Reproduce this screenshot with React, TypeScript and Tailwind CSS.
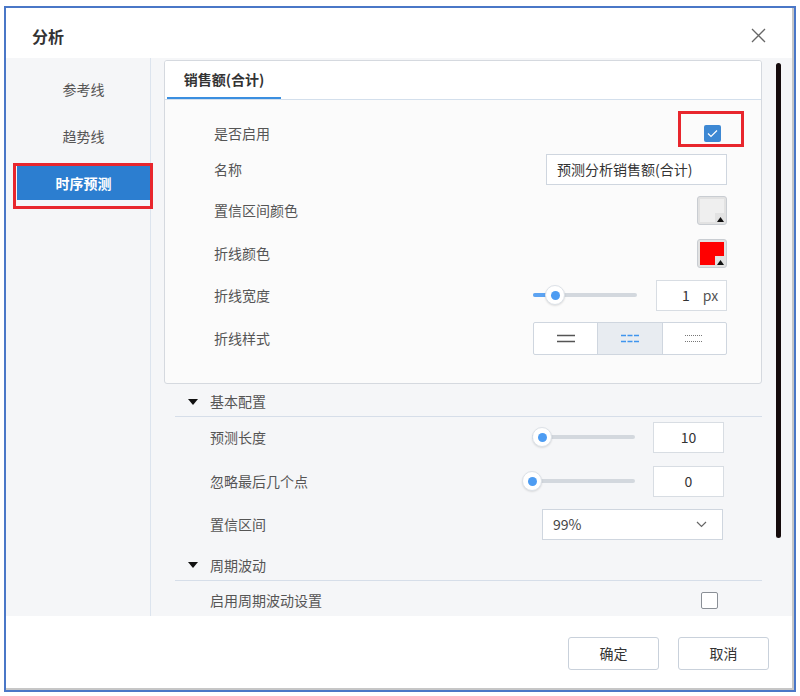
import type { FC, ReactNode } from "react";

// Small slider: track + optional fill + thumb
const Slider: FC<{ width: number; thumb: number }> = ({ width, thumb }) => (
    <div className="relative h-[20px]" style={{ width }}>
        <div className="absolute left-0 right-0 top-[8px] h-[4px] rounded-full bg-[#d3d8de]" />
        <div className="absolute left-0 top-[8px] h-[4px] rounded-full bg-[#5ca3f2]" style={{ width: thumb }} />
        <div
            className="absolute top-0 flex h-[20px] w-[20px] items-center justify-center rounded-full border border-[#dde2e8] bg-white shadow-[0_1px_2px_rgba(0,0,0,0.12)]"
            style={{ left: thumb - 10 }}
        >
            <div className="h-[9px] w-[9px] rounded-full bg-[#4d9cf2]" />
        </div>
    </div>
);

const Swatch: FC<{ fill: string }> = ({ fill }) => (
    <div className="relative h-[29px] w-[30px] rounded-[3px] border border-[#c9cdd2] bg-[#e2e2e2] p-[2px]">
        <div className={`h-full w-full ${fill}`} />
        <div className="absolute bottom-[1px] right-[1px] flex h-[10px] w-[10px] items-end justify-center bg-[#e2e2e2]">
            <svg width="7" height="5" viewBox="0 0 7 5" className="mb-[1px]">
                <polygon points="3.5,0 7,5 0,5" fill="#111" />
            </svg>
        </div>
    </div>
);

const LineIcon: FC<{ dash?: string; color: string; width?: number }> = ({ dash, color, width = 1.5 }) => (
    <svg width="18" height="9" viewBox="0 0 18 9">
        <line x1="0" y1="1.5" x2="18" y2="1.5" stroke={color} strokeWidth={width} strokeDasharray={dash} />
        <line x1="0" y1="7.5" x2="18" y2="7.5" stroke={color} strokeWidth={width} strokeDasharray={dash} />
    </svg>
);

const Row: FC<{ label: string; h: string; children?: ReactNode }> = ({ label, h, children }) => (
    <div className={`flex items-center justify-between ${h}`}>
        <span className="text-[14px] text-[#555]">{label}</span>
        {children}
    </div>
);

const SectionHead: FC<{ label: string; cls: string }> = ({ label, cls }) => (
    <div className={`flex items-center border-b border-[#d6dee9] pl-[13px] ${cls}`}>
        <svg width="10" height="6" viewBox="0 0 10 6">
            <polygon points="0,0 10,0 5,6" fill="#111" />
        </svg>
        <span className="ml-[12px] text-[14px] text-[#555]">{label}</span>
    </div>
);

const App: FC = () => {
    const sideItems = ["参考线", "趋势线", "时序预测"];

    return (
        <div className="h-[696px] w-[800px] bg-white pl-[4px] pt-[6px] font-['Noto_Sans_CJK_SC',sans-serif]">
            <div className="h-[686px] w-[792px] border-2 border-[#4a77c7] bg-white">
                <div className="flex h-full w-full flex-col border-b-2 border-r-2 border-[#c6c6c6]">
                    {/* Title */}
                    <div className="flex h-[50px] shrink-0 items-center justify-between pl-[26px] pr-[26px] pt-[5px]">
                        <span className="text-[16px] font-bold text-[#333]">分析</span>
                        <svg width="15" height="15" viewBox="0 0 15 15">
                            <path d="M1 1 L14 14 M14 1 L1 14" stroke="#666" strokeWidth="1.3" />
                        </svg>
                    </div>

                    {/* Body */}
                    <div className="flex h-[558px] shrink-0 bg-[#f5f6f8]">
                        {/* Sidebar */}
                        <div className="flex w-[145px] shrink-0 flex-col gap-[13px] border-r border-[#dce4ee] pt-[14px]">
                            {sideItems.map((s, i) => {
                                const active = i === 2;
                                return (
                                    <div
                                        key={s}
                                        className={`relative ml-[11px] flex h-[34px] items-center justify-center text-[14px] ${
                                            active ? "bg-[#2c7ed0] font-bold text-white" : "text-[#555]"
                                        }`}
                                    >
                                        {s}
                                        {active && (
                                            <div className="absolute -left-[4px] -top-[3px] h-[46px] w-[140px] border-[3px] border-[#e8262d]" />
                                        )}
                                    </div>
                                );
                            })}
                        </div>

                        {/* Content */}
                        <div className="relative flex-1 overflow-hidden pl-[13px] pt-[2px]">
                            {/* Card */}
                            <div className="w-[598px] overflow-hidden rounded-[3px] border border-[#d5d9df] bg-[#fbfbfb]">
                                <div className="flex h-[39px] border-b border-[#d3dfec] bg-white">
                                    <div className="ml-[2px] flex w-[114px] items-center justify-center border-b-2 border-[#3b8fe0] text-[14px] font-bold text-[#333]">
                                        销售额(合计)
                                    </div>
                                </div>
                                <div className="pb-[23px] pl-[49px] pr-[34px] pt-[16px]">
                                    <Row label="是否启用" h="h-[35px]">
                                        <div className="relative mr-[6px] flex h-[17px] w-[17px] items-center justify-center rounded-[2px] bg-[#3d88d3]">
                                            <svg width="11" height="9" viewBox="0 0 11 9">
                                                <path d="M1 4.5 L4 7.5 L10 1.5" stroke="#fff" strokeWidth="1.2" fill="none" />
                                            </svg>
                                            <div className="absolute -left-[26px] -top-[14px] h-[36px] w-[66px] border-[3px] border-[#e8262d]" />
                                        </div>
                                    </Row>
                                    <Row label="名称" h="h-[37px]">
                                        <div className="flex h-[31px] w-[181px] items-center border border-[#cfd6df] bg-white pl-[10px] text-[14px] text-[#333]">
                                            预测分析销售额(合计)
                                        </div>
                                    </Row>
                                    <Row label="置信区间颜色" h="h-[44px]">
                                        <Swatch fill="bg-[#efefef]" />
                                    </Row>
                                    <Row label="折线颜色" h="h-[42px]">
                                        <Swatch fill="bg-[#ff0000]" />
                                    </Row>
                                    <Row label="折线宽度" h="h-[42px]">
                                        <div className="flex items-center gap-[19px]">
                                            <Slider width={104} thumb={22} />
                                            <div className="flex h-[31px] w-[71px] items-center border border-[#d8dde3] bg-white text-[14px] text-[#333]">
                                                <span className="ml-[25px]">1</span>
                                                <span className="ml-[13px] text-[#555]">px</span>
                                            </div>
                                        </div>
                                    </Row>
                                    <Row label="折线样式" h="h-[44px]">
                                        <div className="flex h-[33px] w-[194px] rounded-[2px] border border-[#cfd6df] bg-white">
                                            <div className="flex flex-1 items-center justify-center border-r border-[#cfd6df]">
                                                <LineIcon color="#555" />
                                            </div>
                                            <div className="flex flex-1 items-center justify-center border-r border-[#cfd6df] bg-[#e8ecf1]">
                                                <LineIcon color="#3f95ee" dash="5 1.5" />
                                            </div>
                                            <div className="flex flex-1 items-center justify-center">
                                                <LineIcon color="#777" dash="1 1" width={1.2} />
                                            </div>
                                        </div>
                                    </Row>
                                </div>
                            </div>

                            {/* Lower settings */}
                            <div className="ml-[11px] w-[587px]">
                                <SectionHead label="基本配置" cls="h-[33px] pt-[3px]" />
                                <div className="pl-[35px] pr-[38px]">
                                    <Row label="预测长度" h="h-[40px]">
                                        <div className="flex items-center gap-[18px]">
                                            <Slider width={103} thumb={10} />
                                            <div className="flex h-[31px] w-[71px] items-center justify-center border border-[#d8dde3] bg-white text-[14px] text-[#333]">
                                                10
                                            </div>
                                        </div>
                                    </Row>
                                    <Row label="忽略最后几个点" h="h-[48px]">
                                        <div className="flex items-center gap-[18px]">
                                            <Slider width={103} thumb={0} />
                                            <div className="flex h-[31px] w-[71px] items-center justify-center border border-[#d8dde3] bg-white text-[14px] text-[#333]">
                                                0
                                            </div>
                                        </div>
                                    </Row>
                                    <Row label="置信区间" h="h-[38px]">
                                        <div className="mr-[1px] flex h-[31px] w-[181px] items-center justify-between border border-[#cfd6df] bg-white pl-[10px] pr-[15px] text-[14px] text-[#444]">
                                            99%
                                            <svg width="11" height="7" viewBox="0 0 11 7">
                                                <path d="M1 1 L5.5 5.5 L10 1" stroke="#666" strokeWidth="1.2" fill="none" />
                                            </svg>
                                        </div>
                                    </Row>
                                </div>
                                <SectionHead label="周期波动" cls="h-[38px] pt-[7px]" />
                                <div className="pl-[35px] pr-[38px]">
                                    <Row label="启用周期波动设置" h="h-[38px]">
                                        <div className="mr-[6px] h-[17px] w-[17px] rounded-[2px] border border-[#8a8f96] bg-white" />
                                    </Row>
                                </div>
                            </div>

                            {/* Scrollbar */}
                            <div className="absolute left-[625px] top-[5px] h-[475px] w-[5px] rounded-full bg-[#150b0c]" />
                        </div>
                    </div>

                    {/* Footer */}
                    <div className="flex flex-1 items-start justify-end gap-[19px] pr-[23px] pt-[21px]">
                        <button className="h-[33px] w-[91px] rounded-[3px] border border-[#c9d1db] bg-white text-[14px] text-[#333]">
                            确定
                        </button>
                        <button className="h-[33px] w-[91px] rounded-[3px] border border-[#c9d1db] bg-white text-[14px] text-[#333]">
                            取消
                        </button>
                    </div>
                </div>
            </div>
        </div>
    );
};

export default App;
